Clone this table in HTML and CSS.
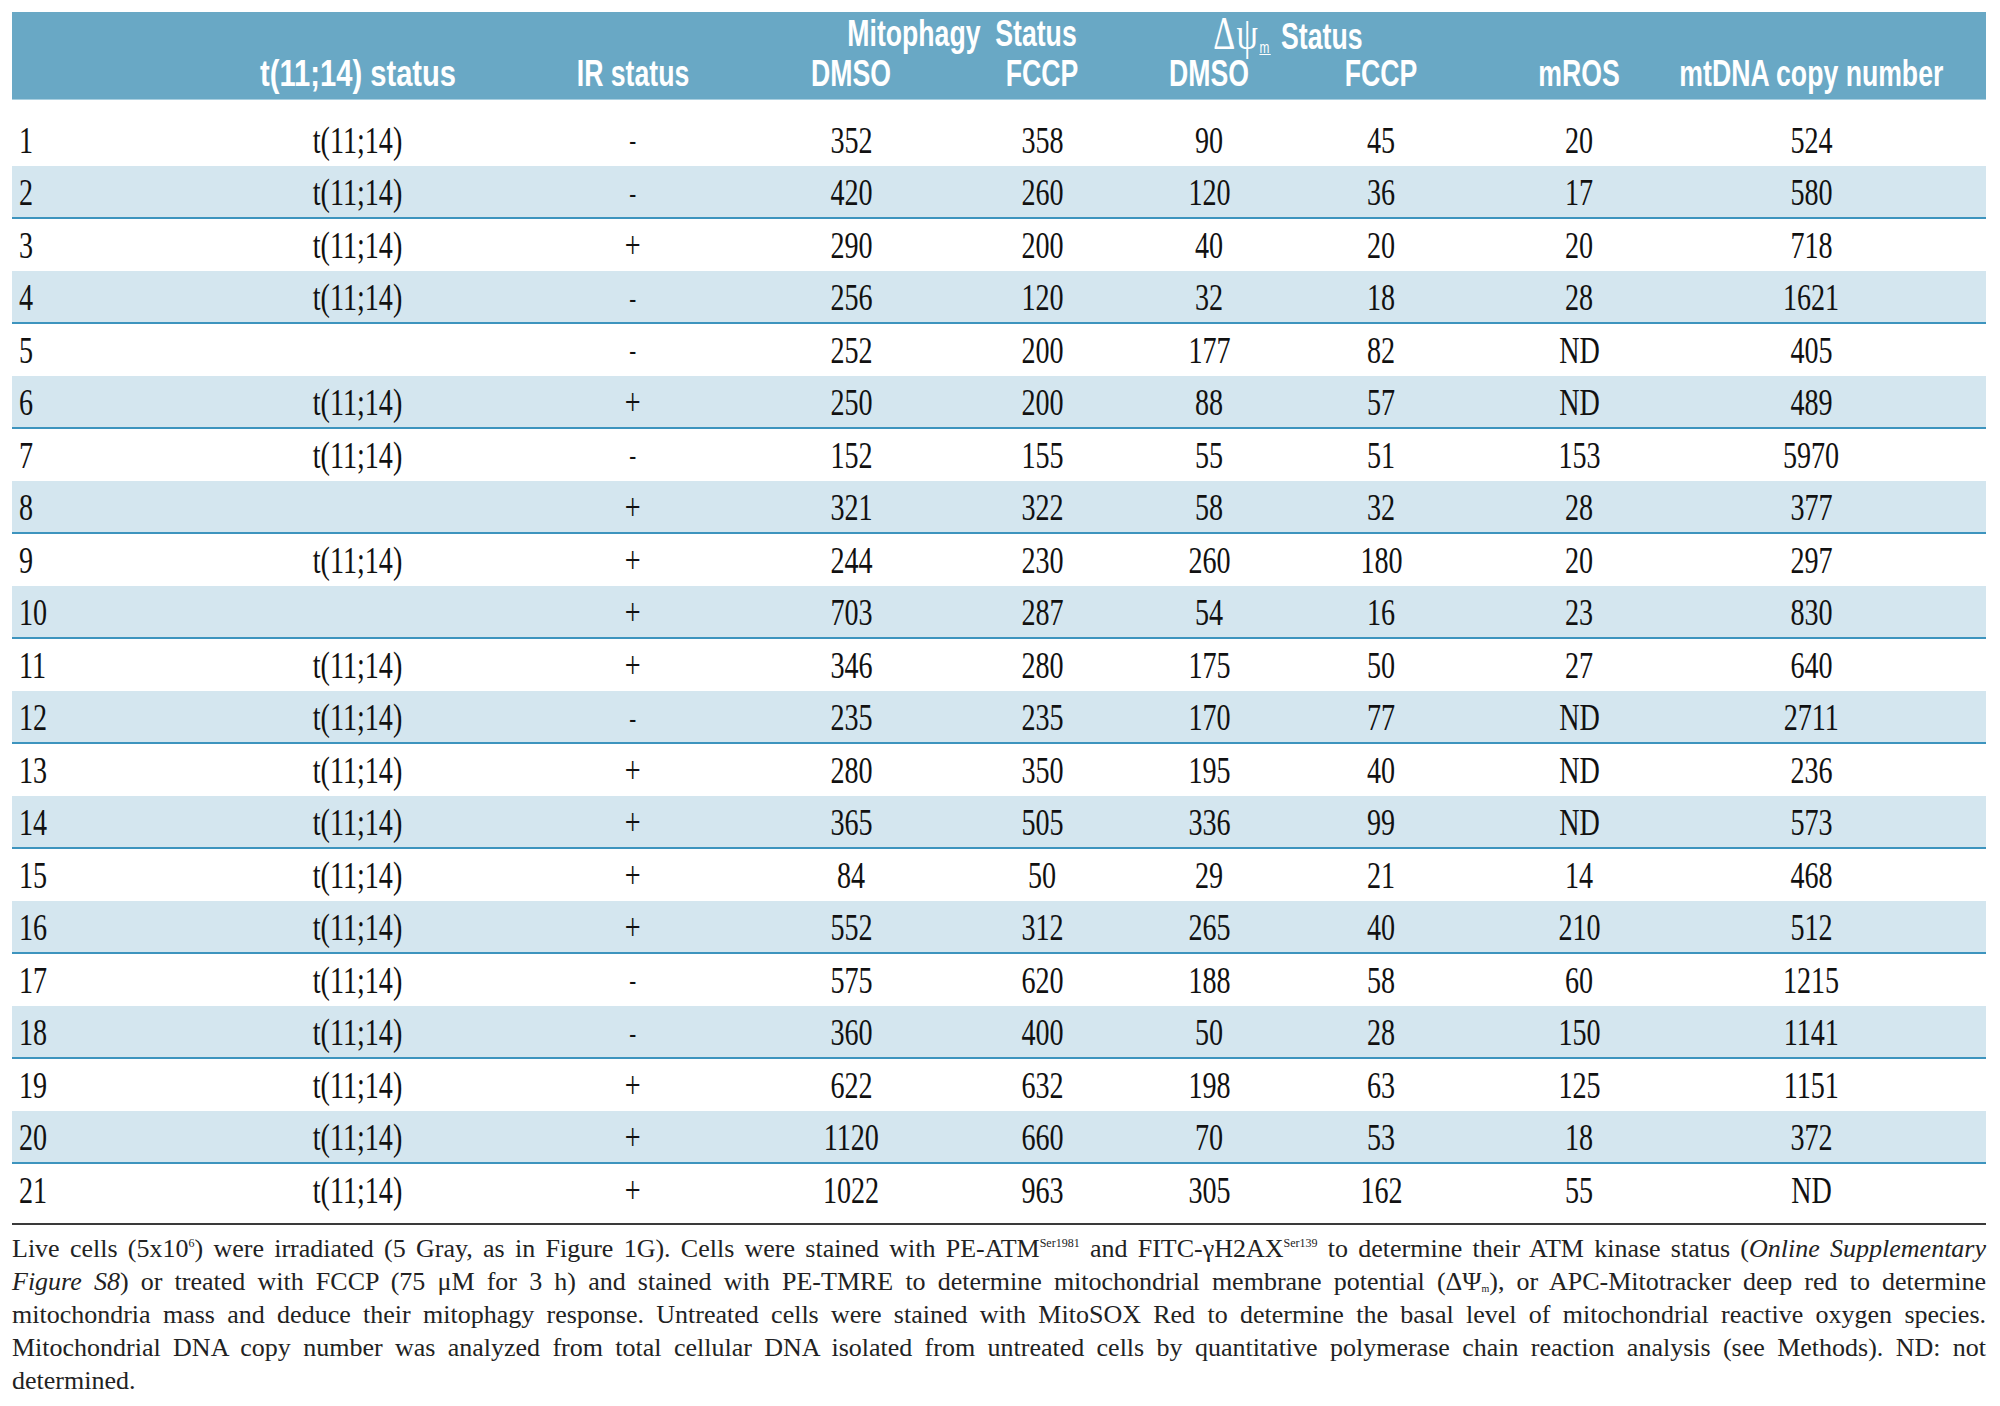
FILE: index.html
```html
<!DOCTYPE html>
<html>
<head>
<meta charset="utf-8">
<link rel="stylesheet" href="styles.css">
</head>
<body>
<div class="page">
  <div class="head">
    <div class="hrow hgroup">
      <div class="hc c-span1"></div>
      <div class="hc g-mito"><span class="sq">Mitophagy&nbsp; Status</span></div>
      <div class="hc g-psi"><span class="sq"><span class="greek">Δψ<sub class="msub">m</sub></span> Status</span></div>
      <div class="hc c-span2"></div>
    </div>
    <div class="hrow hcols">
      <div class="hc"></div>
      <div class="hc"><span class="sq wide">t(11;14) status</span></div>
      <div class="hc"><span class="sq">IR status</span></div>
      <div class="hc"><span class="sq">DMSO</span></div>
      <div class="hc"><span class="sq">FCCP</span></div>
      <div class="hc"><span class="sq">DMSO</span></div>
      <div class="hc"><span class="sq">FCCP</span></div>
      <div class="hc"><span class="sq">mROS</span></div>
      <div class="hc last"><span class="sq">mtDNA copy number</span></div>
    </div>
  </div>
  <div class="rows">
    <div class="row"><div class="c num"><span class="nq">1</span></div><div class="c"><span class="nq">t(11;14)</span></div><div class="c"><span class="nq minus">-</span></div><div class="c"><span class="nq">352</span></div><div class="c"><span class="nq">358</span></div><div class="c"><span class="nq">90</span></div><div class="c"><span class="nq">45</span></div><div class="c"><span class="nq">20</span></div><div class="c last"><span class="nq">524</span></div></div>
    <div class="row alt"><div class="c num"><span class="nq">2</span></div><div class="c"><span class="nq">t(11;14)</span></div><div class="c"><span class="nq minus">-</span></div><div class="c"><span class="nq">420</span></div><div class="c"><span class="nq">260</span></div><div class="c"><span class="nq">120</span></div><div class="c"><span class="nq">36</span></div><div class="c"><span class="nq">17</span></div><div class="c last"><span class="nq">580</span></div></div>
    <div class="row"><div class="c num"><span class="nq">3</span></div><div class="c"><span class="nq">t(11;14)</span></div><div class="c"><span class="nq">+</span></div><div class="c"><span class="nq">290</span></div><div class="c"><span class="nq">200</span></div><div class="c"><span class="nq">40</span></div><div class="c"><span class="nq">20</span></div><div class="c"><span class="nq">20</span></div><div class="c last"><span class="nq">718</span></div></div>
    <div class="row alt"><div class="c num"><span class="nq">4</span></div><div class="c"><span class="nq">t(11;14)</span></div><div class="c"><span class="nq minus">-</span></div><div class="c"><span class="nq">256</span></div><div class="c"><span class="nq">120</span></div><div class="c"><span class="nq">32</span></div><div class="c"><span class="nq">18</span></div><div class="c"><span class="nq">28</span></div><div class="c last"><span class="nq">1621</span></div></div>
    <div class="row"><div class="c num"><span class="nq">5</span></div><div class="c"></div><div class="c"><span class="nq minus">-</span></div><div class="c"><span class="nq">252</span></div><div class="c"><span class="nq">200</span></div><div class="c"><span class="nq">177</span></div><div class="c"><span class="nq">82</span></div><div class="c"><span class="nq">ND</span></div><div class="c last"><span class="nq">405</span></div></div>
    <div class="row alt"><div class="c num"><span class="nq">6</span></div><div class="c"><span class="nq">t(11;14)</span></div><div class="c"><span class="nq">+</span></div><div class="c"><span class="nq">250</span></div><div class="c"><span class="nq">200</span></div><div class="c"><span class="nq">88</span></div><div class="c"><span class="nq">57</span></div><div class="c"><span class="nq">ND</span></div><div class="c last"><span class="nq">489</span></div></div>
    <div class="row"><div class="c num"><span class="nq">7</span></div><div class="c"><span class="nq">t(11;14)</span></div><div class="c"><span class="nq minus">-</span></div><div class="c"><span class="nq">152</span></div><div class="c"><span class="nq">155</span></div><div class="c"><span class="nq">55</span></div><div class="c"><span class="nq">51</span></div><div class="c"><span class="nq">153</span></div><div class="c last"><span class="nq">5970</span></div></div>
    <div class="row alt"><div class="c num"><span class="nq">8</span></div><div class="c"></div><div class="c"><span class="nq">+</span></div><div class="c"><span class="nq">321</span></div><div class="c"><span class="nq">322</span></div><div class="c"><span class="nq">58</span></div><div class="c"><span class="nq">32</span></div><div class="c"><span class="nq">28</span></div><div class="c last"><span class="nq">377</span></div></div>
    <div class="row"><div class="c num"><span class="nq">9</span></div><div class="c"><span class="nq">t(11;14)</span></div><div class="c"><span class="nq">+</span></div><div class="c"><span class="nq">244</span></div><div class="c"><span class="nq">230</span></div><div class="c"><span class="nq">260</span></div><div class="c"><span class="nq">180</span></div><div class="c"><span class="nq">20</span></div><div class="c last"><span class="nq">297</span></div></div>
    <div class="row alt"><div class="c num"><span class="nq">10</span></div><div class="c"></div><div class="c"><span class="nq">+</span></div><div class="c"><span class="nq">703</span></div><div class="c"><span class="nq">287</span></div><div class="c"><span class="nq">54</span></div><div class="c"><span class="nq">16</span></div><div class="c"><span class="nq">23</span></div><div class="c last"><span class="nq">830</span></div></div>
    <div class="row"><div class="c num"><span class="nq">11</span></div><div class="c"><span class="nq">t(11;14)</span></div><div class="c"><span class="nq">+</span></div><div class="c"><span class="nq">346</span></div><div class="c"><span class="nq">280</span></div><div class="c"><span class="nq">175</span></div><div class="c"><span class="nq">50</span></div><div class="c"><span class="nq">27</span></div><div class="c last"><span class="nq">640</span></div></div>
    <div class="row alt"><div class="c num"><span class="nq">12</span></div><div class="c"><span class="nq">t(11;14)</span></div><div class="c"><span class="nq minus">-</span></div><div class="c"><span class="nq">235</span></div><div class="c"><span class="nq">235</span></div><div class="c"><span class="nq">170</span></div><div class="c"><span class="nq">77</span></div><div class="c"><span class="nq">ND</span></div><div class="c last"><span class="nq">2711</span></div></div>
    <div class="row"><div class="c num"><span class="nq">13</span></div><div class="c"><span class="nq">t(11;14)</span></div><div class="c"><span class="nq">+</span></div><div class="c"><span class="nq">280</span></div><div class="c"><span class="nq">350</span></div><div class="c"><span class="nq">195</span></div><div class="c"><span class="nq">40</span></div><div class="c"><span class="nq">ND</span></div><div class="c last"><span class="nq">236</span></div></div>
    <div class="row alt"><div class="c num"><span class="nq">14</span></div><div class="c"><span class="nq">t(11;14)</span></div><div class="c"><span class="nq">+</span></div><div class="c"><span class="nq">365</span></div><div class="c"><span class="nq">505</span></div><div class="c"><span class="nq">336</span></div><div class="c"><span class="nq">99</span></div><div class="c"><span class="nq">ND</span></div><div class="c last"><span class="nq">573</span></div></div>
    <div class="row"><div class="c num"><span class="nq">15</span></div><div class="c"><span class="nq">t(11;14)</span></div><div class="c"><span class="nq">+</span></div><div class="c"><span class="nq">84</span></div><div class="c"><span class="nq">50</span></div><div class="c"><span class="nq">29</span></div><div class="c"><span class="nq">21</span></div><div class="c"><span class="nq">14</span></div><div class="c last"><span class="nq">468</span></div></div>
    <div class="row alt"><div class="c num"><span class="nq">16</span></div><div class="c"><span class="nq">t(11;14)</span></div><div class="c"><span class="nq">+</span></div><div class="c"><span class="nq">552</span></div><div class="c"><span class="nq">312</span></div><div class="c"><span class="nq">265</span></div><div class="c"><span class="nq">40</span></div><div class="c"><span class="nq">210</span></div><div class="c last"><span class="nq">512</span></div></div>
    <div class="row"><div class="c num"><span class="nq">17</span></div><div class="c"><span class="nq">t(11;14)</span></div><div class="c"><span class="nq minus">-</span></div><div class="c"><span class="nq">575</span></div><div class="c"><span class="nq">620</span></div><div class="c"><span class="nq">188</span></div><div class="c"><span class="nq">58</span></div><div class="c"><span class="nq">60</span></div><div class="c last"><span class="nq">1215</span></div></div>
    <div class="row alt"><div class="c num"><span class="nq">18</span></div><div class="c"><span class="nq">t(11;14)</span></div><div class="c"><span class="nq minus">-</span></div><div class="c"><span class="nq">360</span></div><div class="c"><span class="nq">400</span></div><div class="c"><span class="nq">50</span></div><div class="c"><span class="nq">28</span></div><div class="c"><span class="nq">150</span></div><div class="c last"><span class="nq">1141</span></div></div>
    <div class="row"><div class="c num"><span class="nq">19</span></div><div class="c"><span class="nq">t(11;14)</span></div><div class="c"><span class="nq">+</span></div><div class="c"><span class="nq">622</span></div><div class="c"><span class="nq">632</span></div><div class="c"><span class="nq">198</span></div><div class="c"><span class="nq">63</span></div><div class="c"><span class="nq">125</span></div><div class="c last"><span class="nq">1151</span></div></div>
    <div class="row alt"><div class="c num"><span class="nq">20</span></div><div class="c"><span class="nq">t(11;14)</span></div><div class="c"><span class="nq">+</span></div><div class="c"><span class="nq">1120</span></div><div class="c"><span class="nq">660</span></div><div class="c"><span class="nq">70</span></div><div class="c"><span class="nq">53</span></div><div class="c"><span class="nq">18</span></div><div class="c last"><span class="nq">372</span></div></div>
    <div class="row"><div class="c num"><span class="nq">21</span></div><div class="c"><span class="nq">t(11;14)</span></div><div class="c"><span class="nq">+</span></div><div class="c"><span class="nq">1022</span></div><div class="c"><span class="nq">963</span></div><div class="c"><span class="nq">305</span></div><div class="c"><span class="nq">162</span></div><div class="c"><span class="nq">55</span></div><div class="c last"><span class="nq">ND</span></div></div>
  </div>
  <div class="rule"></div>
  <div class="note">
    <span class="ln">Live cells (5x10<sup class="sup6">6</sup>) were irradiated (5 Gray, as in Figure 1G). Cells were stained with PE-ATM<sup class="ser">Ser1981</sup> and FITC-γH2AX<sup class="ser">Ser139</sup> to determine their ATM kinase status (<i>Online Supplementary</i></span>
    <span class="ln"><i>Figure S8</i>) or treated with FCCP (75 μM for 3 h) and stained with PE-TMRE to determine mitochondrial membrane potential (ΔΨ<sub class="tinysub">m</sub>), or APC-Mitotracker deep red to determine</span>
    <span class="ln">mitochondria mass and deduce their mitophagy response. Untreated cells were stained with MitoSOX Red to determine the basal level of mitochondrial reactive oxygen species.</span>
    <span class="ln">Mitochondrial DNA copy number was analyzed from total cellular DNA isolated from untreated cells by quantitative polymerase chain reaction analysis (see Methods). ND: not</span>
    <span class="ln end">determined.</span>
  </div>
</div>
</body>
</html>
```
FILE: styles.css
```css
html, body {
  margin: 0;
  padding: 0;
  background: #ffffff;
}

.page {
  width: 1974px;
  padding: 12px 14px 0 12px;
}

.head {
  background: #69a8c5;
  color: #ffffff;
  font-family: "Liberation Sans", Arial, sans-serif;
  font-weight: bold;
  font-size: 36px;
  border-bottom: 1px solid #a9cfe0;
}

.hrow,
.row {
  display: grid;
  grid-template-columns: 218px 256px 294px 142px 240px 94px 250px 146px 334px;
}

.hgroup {
  height: 44px;
  line-height: 44px;
}

.hcols {
  height: 36px;
  line-height: 36px;
  padding-bottom: 7px;
}

.hc {
  display: flex;
  justify-content: center;
  white-space: nowrap;
}

.hc.last,
.c.last {
  padding-right: 16px;
}

.c-span1 {
  grid-column: 1 / 4;
}

.g-mito {
  grid-column: 4 / 6;
  padding-right: 18px;
}

.g-psi {
  grid-column: 6 / 8;
  padding-right: 92px;
}

.c-span2 {
  grid-column: 8 / 10;
}

.sq {
  display: inline-block;
  flex: none;
  transform: scaleX(0.74);
}

.sq.wide {
  transform: scaleX(0.81);
}

.greek {
  font-family: "Liberation Serif", "Times New Roman", serif;
  font-weight: normal;
  font-size: 46px;
  letter-spacing: 2px;
}

.msub {
  font-family: "Liberation Sans", Arial, sans-serif;
  font-size: 16px;
  text-decoration: underline;
  vertical-align: -4px;
  line-height: 0;
  margin-right: 4px;
}

.rows {
  margin-top: 14px;
  font-family: "Liberation Serif", "Times New Roman", serif;
  font-size: 38px;
  color: #111111;
}

.row {
  height: 52px;
  line-height: 52px;
}

.row.alt {
  height: 51px;
  line-height: 53px;
  background: #d4e6ef;
  border-bottom: 2px solid #3d94be;
}

.c {
  display: flex;
  justify-content: center;
  white-space: nowrap;
}

.c.num {
  justify-content: flex-start;
  padding-left: 7px;
}

.nq {
  display: inline-block;
  flex: none;
  transform: scaleX(0.74);
}

.num .nq {
  transform-origin: left center;
}

.minus {
  font-size: 28px;
}

.rule {
  margin-top: 7px;
  height: 2px;
  background: #3a3a3a;
}

.note {
  margin-top: 7px;
  font-family: "Liberation Serif", "Times New Roman", serif;
  font-size: 26px;
  line-height: 33px;
  color: #222222;
}

.ln {
  display: block;
  white-space: nowrap;
  text-align: justify;
  text-align-last: justify;
}

.ln.end {
  text-align-last: left;
}

.sup6 {
  font-size: 12px;
  vertical-align: 10px;
  line-height: 0;
}

.ser {
  font-size: 12px;
  vertical-align: 10px;
  line-height: 0;
}

.tinysub {
  font-size: 10px;
  vertical-align: -2px;
  line-height: 0;
}
```
